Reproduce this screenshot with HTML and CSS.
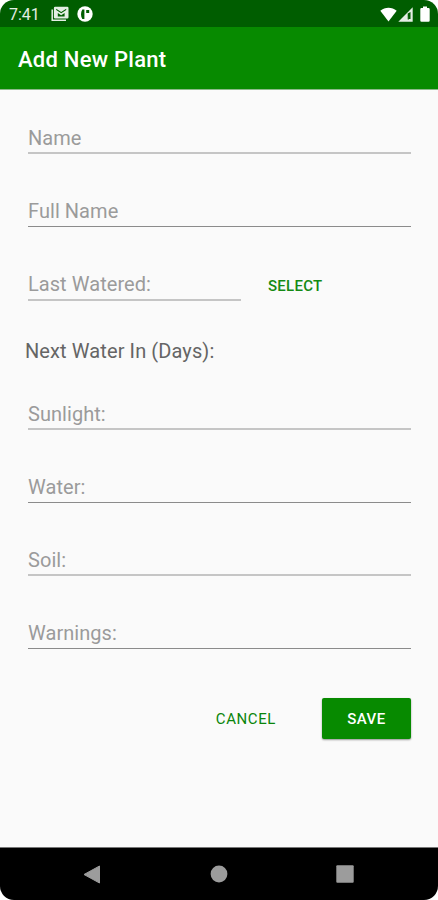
FILE: index.html
```html
<!DOCTYPE html>
<html lang="en">
<head>
<meta charset="utf-8">
<title>Add New Plant</title>
<link rel="stylesheet" href="styles.css">
</head>
<body>
<div class="phone">
  <header class="status">
    <span class="clock">7:41</span>
    <svg class="mail" width="18" height="16" viewBox="0 0 18 16"><path d="M1.200 3.500V14.300H15" fill="none" stroke="#e4eee4" stroke-width="1.500"/><path fill="#e4eee4" fill-rule="evenodd" d="M4.200.7h12a1.300 1.300 0 0 1 1.300 1.300v9.200a1.300 1.300 0 0 1-1.300 1.300h-12A1.300 1.300 0 0 1 2.900 11.200V2A1.300 1.300 0 0 1 4.200.7zM5.200 2.700v1.300l5 3.300 5-3.300V2.700l-5 3.200zM6.800 7v3.400h6.800V7l-3.400 2.200z"/></svg>
    <svg class="app" width="16" height="16" viewBox="0 0 16 16"><circle cx="8" cy="8" r="7.700" fill="#fff"/><path d="M5.300 3.500H7.400V13H5.300C3.600 10.500 3.600 6 5.300 3.500zM9.200 3.900h3v3.200h-3z" fill="#005d00"/></svg>
    <span class="spacer"></span>
    <svg class="wifi" width="17" height="15" viewBox="0 0 17 15"><path d="M.3 3.700C5-.4 12-.4 16.700 3.700L8.500 14.500z" fill="#fff"/></svg>
    <svg class="signal" width="15" height="15" viewBox="0 0 15 15"><path d="M.3 14.700L14.700.3V14.700z" fill="#e4eee4"/><path d="M9.700 6.500L12.500 5v7H11V7.500L10.900 12.500H9.700z" fill="#005d00"/></svg>
    <svg class="battery" width="10" height="16" viewBox="0 0 10 16"><path d="M3 .5h4V2h1.500a1.200 1.200 0 0 1 1.200 1.200v11.300a1.200 1.200 0 0 1-1.200 1.200h-7A1.200 1.200 0 0 1 .3 14.500V3.200A1.200 1.200 0 0 1 1.500 2H3z" fill="#fff"/></svg>
  </header>
  <div class="appbar"><h1>Add New Plant</h1></div>
  <main class="form">
    <div class="field soft">Name</div>
    <div class="field">Full Name</div>
    <div class="watered">
      <div class="field soft">Last Watered:</div>
      <span class="select">SELECT</span>
    </div>
    <div class="next">Next Water In (Days):</div>
    <div class="field soft sunlight">Sunlight:</div>
    <div class="field">Water:</div>
    <div class="field soft">Soil:</div>
    <div class="field">Warnings:</div>
    <div class="actions">
      <span class="cancel">CANCEL</span>
      <span class="save">SAVE</span>
    </div>
  </main>
  <nav class="navbar">
    <svg width="18" height="19" viewBox="0 0 18 19"><path d="M1 9.500L16.500 1V18z" fill="#9c9c9c" stroke="#9c9c9c" stroke-linejoin="round"/></svg>
    <svg width="18" height="18" viewBox="0 0 18 18"><circle cx="9" cy="9" r="8.400" fill="#9c9c9c"/></svg>
    <svg width="18" height="18" viewBox="0 0 18 18"><rect x=".3" y=".3" width="17.400" height="17.400" rx="1" fill="#9c9c9c"/></svg>
  </nav>
</div>
</body>
</html>
```
FILE: styles.css
```css
* { box-sizing: border-box; }
body { margin: 0; background: #fff; font-family: Roboto, sans-serif; }
.phone {
  width: 438px;
  height: 900px;
  display: flex;
  flex-direction: column;
  overflow: hidden;
  background: #fafafa;
  border-radius: 14px;
}
.status {
  height: 27px;
  flex: none;
  display: flex;
  align-items: center;
  padding: 1px 8px 0 9px;
  background: #005d00;
}
.clock { width: 42px; padding-top: 1px; font-size: 16px; line-height: 26px; color: #e4eee4; }
.app { margin-left: 8px; }
.spacer { flex: 1; }
.battery { margin-left: 7px; }
.signal { margin-left: 1px; }
.appbar {
  height: 63px;
  flex: none;
  display: flex;
  align-items: center;
  padding: 4px 18px 0;
  background: #078a00;
  border-bottom: 1px solid #8dba8b;
}
h1 { margin: 0; font-size: 22px; line-height: 28px; font-weight: 500; letter-spacing: .25px; color: #fff; }
.form { flex: 1; padding: 28px 27px 0 28px; }
.field {
  height: 36px;
  margin-bottom: 37px;
  border-bottom: 1px solid #8b8b8b;
  font-size: 20px;
  line-height: 40px;
  letter-spacing: .05px;
  color: #9b9b9b;
}
.soft { border-bottom: 2px solid #c5c5c5; }
.watered { display: flex; }
.watered .field { width: 213px; margin-bottom: 0; height: 37px; }
.select { margin-left: 27px; font-size: 15px; line-height: 44px; height: 37px; font-weight: 500; letter-spacing: .25px; color: #148a14; }
.next { margin: 35px 0 0 -3px; height: 30px; font-size: 20px; line-height: 30px; letter-spacing: .1px; color: #656565; }
.sunlight { margin-top: 28px; }
.actions { display: flex; justify-content: flex-end; margin-top: 49px; }
.cancel { margin-right: 46px; font-size: 15px; line-height: 42px; color: #0a850a; letter-spacing: .6px; }
.save {
  width: 89px;
  height: 41px;
  border-radius: 2px;
  background: #078a00;
  box-shadow: 0 1px 2px #0006;
  color: #fff;
  font-size: 15px;
  line-height: 42px;
  font-weight: 500;
  letter-spacing: .5px;
  text-align: center;
}
.navbar {
  height: 53px;
  flex: none;
  display: flex;
  align-items: center;
  justify-content: space-between;
  padding: 0 84px 0 83px;
  background: #000;
  border-top: 1px solid #777;
}
```
